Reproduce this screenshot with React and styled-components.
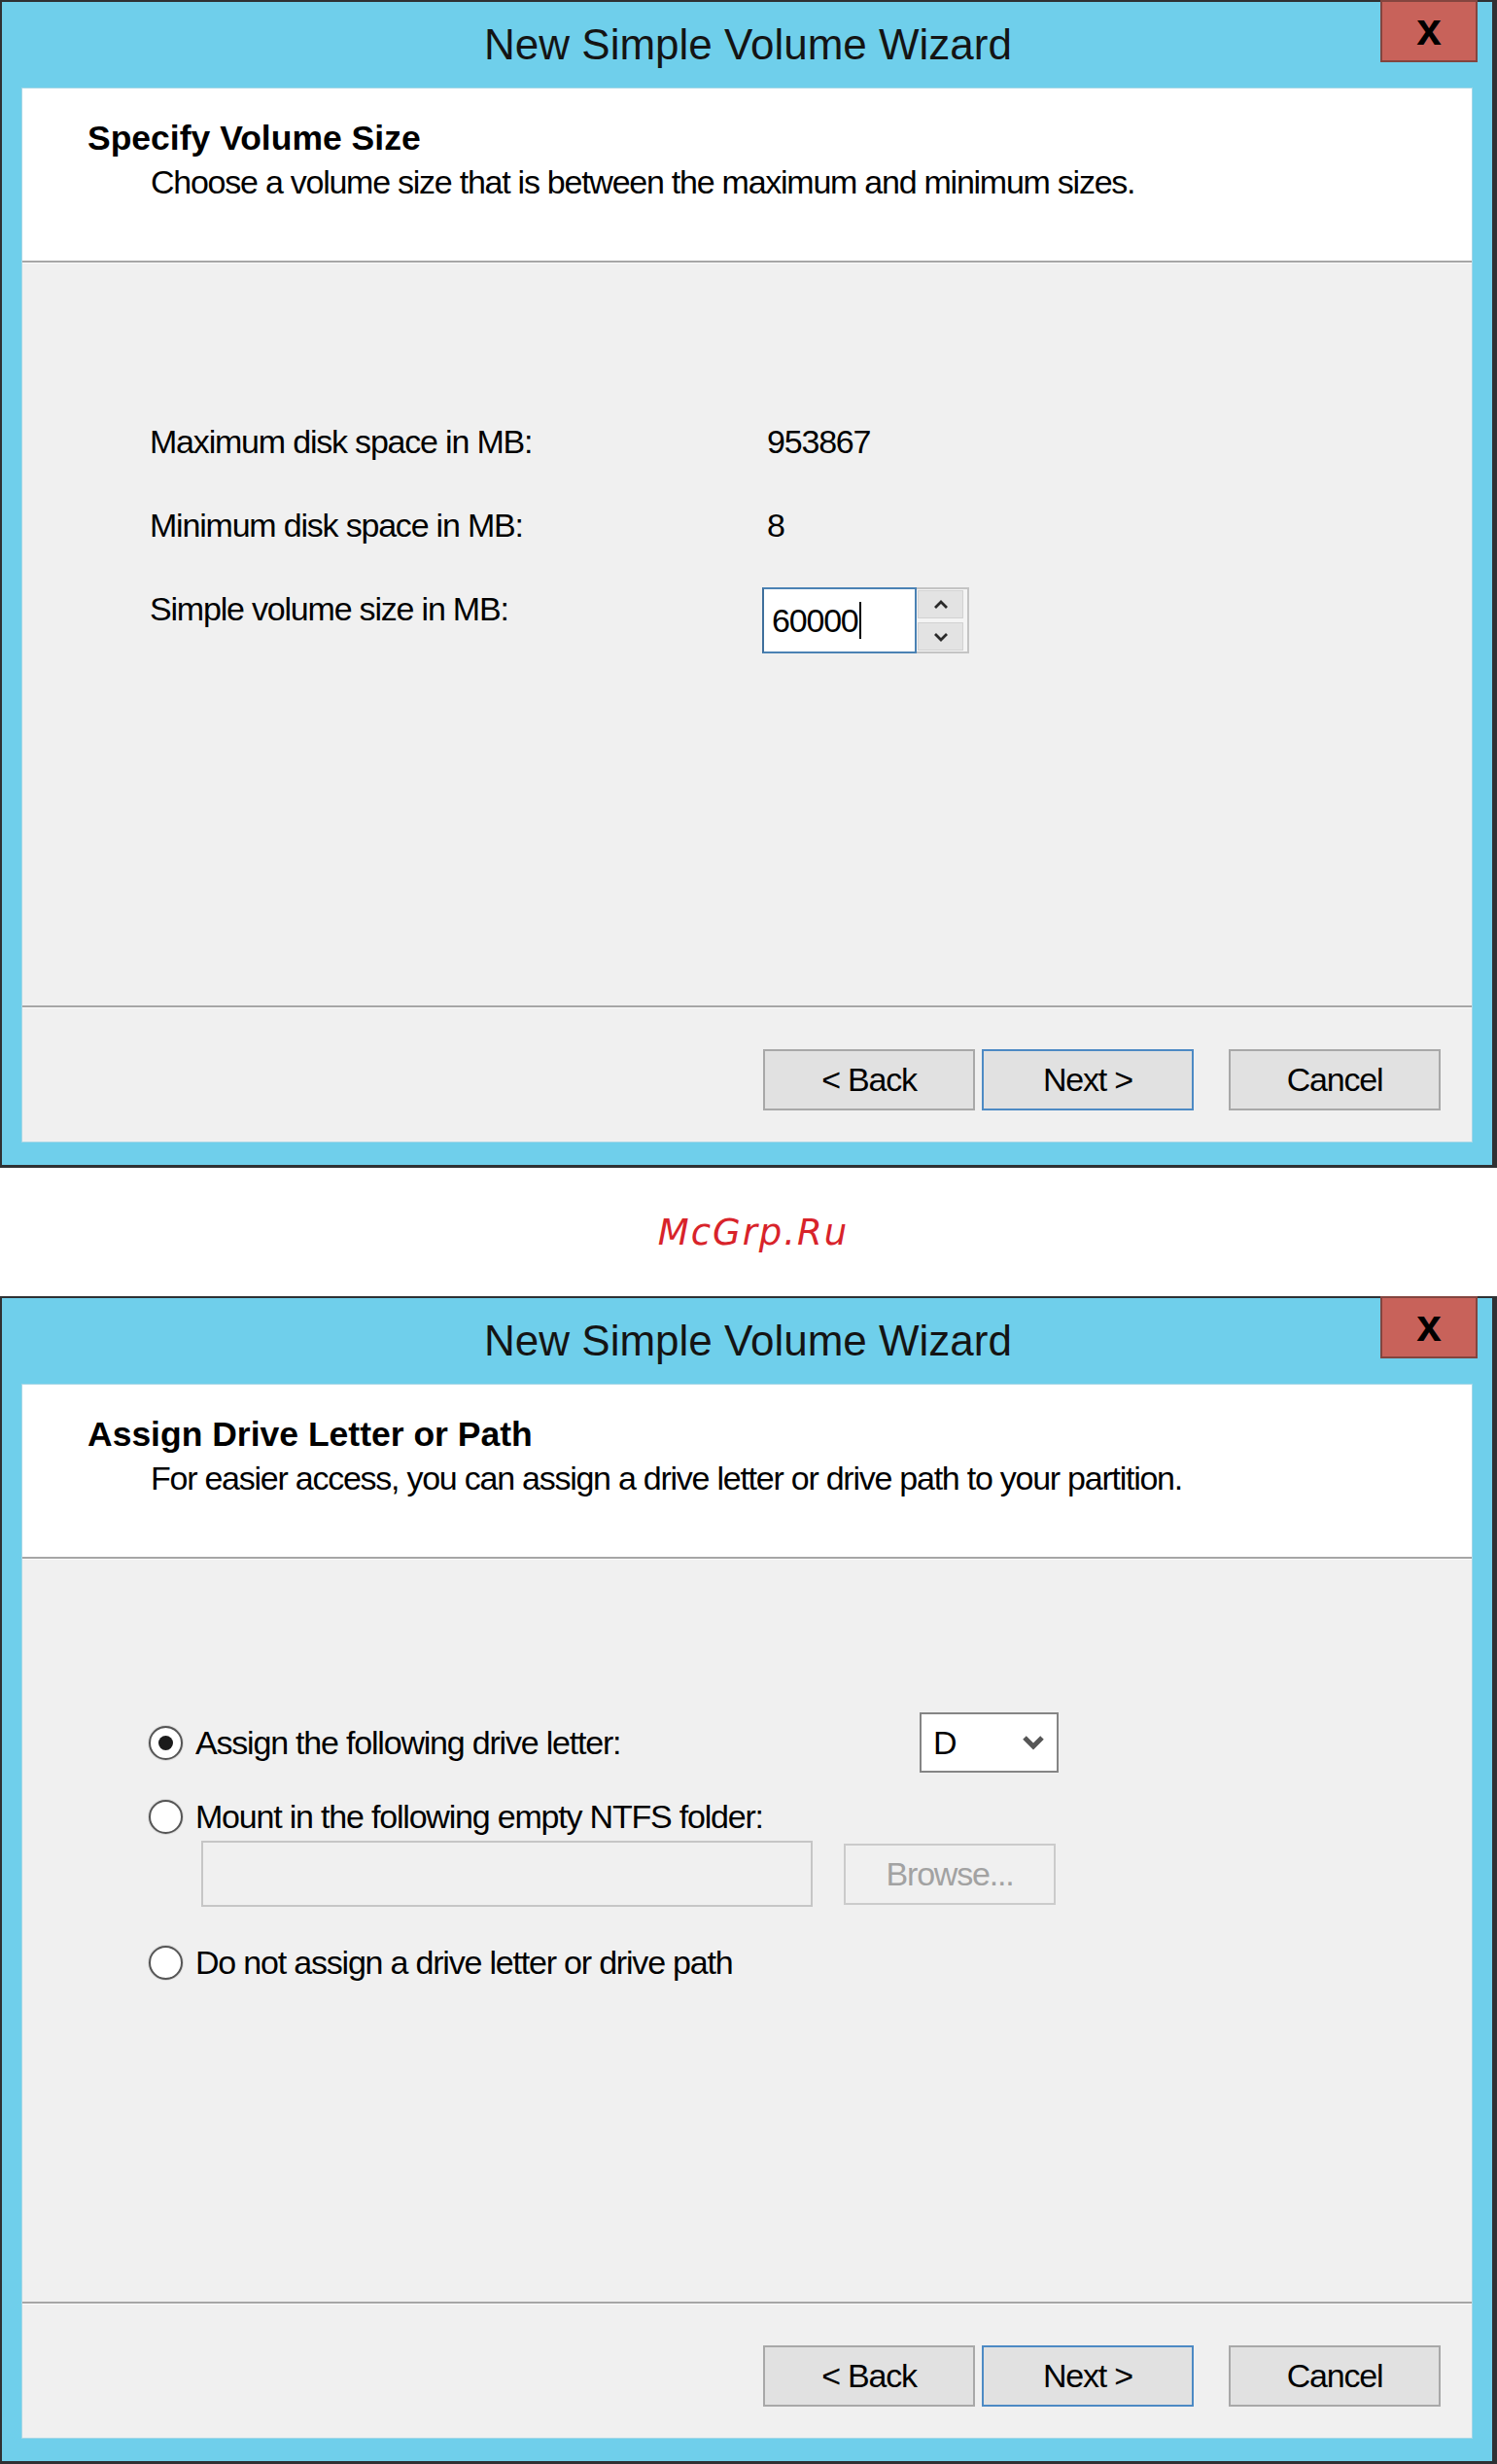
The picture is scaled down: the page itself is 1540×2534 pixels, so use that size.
import React from 'react';
import styled, { createGlobalStyle } from 'styled-components';

const GlobalStyle = createGlobalStyle`
  html, body {
    margin: 0;
    padding: 0;
    background: #ffffff;
  }
  body {
    font-family: "Liberation Sans", Arial, sans-serif;
    color: #000;
  }
`;

const Page = styled.div`
  width: 1540px;
  display: flex;
  flex-direction: column;
`;

const Window = styled.div`
  height: 1201px;
  box-sizing: border-box;
  display: flex;
  flex-direction: column;
  background: #6fcfeb;
  border-style: solid;
  border-color: #2f3133;
  border-width: 2px 5px 3px 2px;
  padding-bottom: 23px;
`;

const TitleBar = styled.div`
  position: relative;
  height: 88px;
  flex: none;
  display: flex;
  align-items: center;
  justify-content: center;
`;

const Title = styled.div`
  font-size: 44px;
  line-height: 50px;
  color: #141414;
  margin-left: 2px;
`;

const CloseButton = styled.div`
  position: absolute;
  top: -2px;
  right: 15px;
  width: 100px;
  height: 64px;
  box-sizing: border-box;
  background: #c8625a;
  border: 2px solid #83453f;
  display: flex;
  align-items: center;
  justify-content: center;
  font-size: 46px;
  font-weight: 900;
  line-height: 1;
  padding-bottom: 4px;
  color: #000;
`;

const Panel = styled.div`
  flex: 1;
  margin: 0 20px;
  display: flex;
  flex-direction: column;
  border: 1px solid #a4d6e6;
  background: #f0f0f0;
`;

const Header = styled.div`
  height: 177px;
  flex: none;
  box-sizing: border-box;
  background: #ffffff;
  padding: 31px 0 0 67px;
`;

const Heading = styled.div`
  font-size: 35.5px;
  line-height: 40px;
  font-weight: 700;
`;

const Subtitle = styled.div`
  font-size: 34px;
  line-height: 40px;
  letter-spacing: -1.25px;
  margin-top: 5px;
  padding-left: 65px;
`;

const Separator = styled.div`
  height: 2px;
  flex: none;
  background: #a6a6a6;
  border-bottom: 1px solid #fbfbfb;
`;

const Body = styled.div`
  flex: 1;
  box-sizing: border-box;
  padding: ${(p) => p.$top}px 0 0 ${(p) => p.$left || 130}px;
`;

const Text = styled.div`
  font-size: 34px;
  line-height: 40px;
  letter-spacing: -1.2px;
  color: ${(p) => (p.$disabled ? '#a2a2a2' : '#000')};
  white-space: nowrap;
`;

const SizeGrid = styled.div`
  display: grid;
  grid-template-columns: 630px auto;
  row-gap: 46px;
  align-items: start;
`;

const Value = styled(Text)`
  padding-left: 5px;
`;

const SpinBox = styled.div`
  display: flex;
  margin-top: -2px;
`;

const SpinInput = styled.div`
  width: 159px;
  height: 68px;
  box-sizing: border-box;
  background: #ffffff;
  border: 2px solid #4b82b4;
  border-left-color: #3f6f9c;
  display: flex;
  align-items: center;
  padding-left: 8px;
`;

const Cursor = styled.span`
  display: inline-block;
  width: 2px;
  height: 38px;
  background: #000;
  margin-left: 1px;
`;

const Spinner = styled.div`
  width: 54px;
  height: 68px;
  box-sizing: border-box;
  border: 2px solid #c4c4c4;
  border-left: none;
  background: #f4f4f4;
  display: flex;
  flex-direction: column;
  gap: 4px;
  padding: 1px 4px 1px 1px;
`;

const SpinButton = styled.div`
  flex: 1;
  background: #e3e3e3;
  border: 1px solid #d2d2d2;
  display: flex;
  align-items: center;
  justify-content: center;
`;

const Footer = styled.div`
  height: 137px;
  flex: none;
  box-sizing: border-box;
  display: flex;
  justify-content: flex-end;
  align-items: flex-start;
  padding: 42px 32px 0 0;
`;

const Button = styled.div`
  width: 218px;
  height: 63px;
  box-sizing: border-box;
  background: ${(p) => (p.$disabled ? '#f0f0f0' : '#e1e1e1')};
  border: 2px solid ${(p) => (p.$default ? '#4d8ac4' : p.$disabled ? '#cbcbcb' : '#a8a8a8')};
  margin-left: ${(p) => p.$gap || 0}px;
  display: flex;
  align-items: center;
  justify-content: center;
  font-size: 34px;
  letter-spacing: -1.2px;
  color: ${(p) => (p.$disabled ? '#a2a2a2' : '#000')};
`;

const Watermark = styled.div`
  height: 132px;
  flex: none;
  display: flex;
  align-items: center;
  justify-content: center;
  font-family: "DejaVu Sans", sans-serif;
  font-style: italic;
  font-size: 37px;
  letter-spacing: 2px;
  color: #d8232a;
  padding-left: 10px;
`;

const LetterRow = styled.div`
  display: grid;
  grid-template-columns: 793px 143px;
  align-items: center;
`;

const RadioRow = styled.div`
  display: flex;
  align-items: center;
  gap: 13px;
  margin-top: ${(p) => p.$mt || 0}px;
`;

const Radio = styled.span`
  width: 35px;
  height: 35px;
  box-sizing: border-box;
  border-radius: 50%;
  border: 2px solid #555;
  background: #fff;
  box-shadow: 0 0 0 1px #d8d8d8;
  display: flex;
  align-items: center;
  justify-content: center;
  flex: none;

  &::after {
    content: '';
    width: 15px;
    height: 15px;
    border-radius: 50%;
    background: #1b1b1b;
    display: ${(p) => (p.$checked ? 'block' : 'none')};
  }
`;

const Select = styled.div`
  width: 143px;
  height: 62px;
  box-sizing: border-box;
  background: #fff;
  border: 2px solid #858585;
  display: flex;
  align-items: center;
  justify-content: space-between;
  padding: 0 12px 0 12px;
`;

const FolderRow = styled.div`
  display: flex;
  align-items: center;
  gap: 32px;
  padding-left: 54px;
  margin-top: 5px;
`;

const FolderField = styled.div`
  width: 629px;
  height: 68px;
  box-sizing: border-box;
  border: 2px solid #c6c6c6;
  background: #f0f0f0;
`;

function Caret({ down }) {
  return (
    <svg width="18" height="12" viewBox="0 0 18 12">
      <polyline
        points={down ? '3,3 9,9 15,3' : '3,9 9,3 15,9'}
        fill="none"
        stroke="#2a2a2a"
        strokeWidth="2.8"
      />
    </svg>
  );
}

function WizardFooter() {
  return (
    <>
      <Separator />
      <Footer>
        <Button>&lt; Back</Button>
        <Button $default $gap={7}>Next &gt;</Button>
        <Button $gap={36}>Cancel</Button>
      </Footer>
    </>
  );
}

function WizardWindow({ heading, subtitle, children }) {
  return (
    <Window>
      <TitleBar>
        <Title>New Simple Volume Wizard</Title>
        <CloseButton>x</CloseButton>
      </TitleBar>
      <Panel>
        <Header>
          <Heading>{heading}</Heading>
          <Subtitle>{subtitle}</Subtitle>
        </Header>
        <Separator />
        {children}
        <WizardFooter />
      </Panel>
    </Window>
  );
}

function VolumeSize() {
  return (
    <WizardWindow
      heading="Specify Volume Size"
      subtitle="Choose a volume size that is between the maximum and minimum sizes."
    >
      <Body $top={163} $left={131}>
        <SizeGrid>
          <Text>Maximum disk space in MB:</Text>
          <Value>953867</Value>
          <Text>Minimum disk space in MB:</Text>
          <Value>8</Value>
          <Text>Simple volume size in MB:</Text>
          <SpinBox>
            <SpinInput>
              <Text>60000</Text>
              <Cursor />
            </SpinInput>
            <Spinner>
              <SpinButton>
                <Caret />
              </SpinButton>
              <SpinButton>
                <Caret down />
              </SpinButton>
            </Spinner>
          </SpinBox>
        </SizeGrid>
      </Body>
    </WizardWindow>
  );
}

function DriveLetter() {
  return (
    <WizardWindow
      heading="Assign Drive Letter or Path"
      subtitle="For easier access, you can assign a drive letter or drive path to your partition."
    >
      <Body $top={157}>
        <LetterRow>
          <RadioRow>
            <Radio $checked />
            <Text>Assign the following drive letter:</Text>
          </RadioRow>
          <Select>
            <Text>D</Text>
            <svg width="24" height="20" viewBox="0 0 24 20">
              <polyline points="3,5 12,14 21,5" fill="none" stroke="#565656" strokeWidth="5" />
            </svg>
          </Select>
        </LetterRow>
        <RadioRow $mt={25}>
          <Radio />
          <Text>Mount in the following empty NTFS folder:</Text>
        </RadioRow>
        <FolderRow>
          <FolderField />
          <Button $disabled>Browse...</Button>
        </FolderRow>
        <RadioRow $mt={37}>
          <Radio />
          <Text>Do not assign a drive letter or drive path</Text>
        </RadioRow>
      </Body>
    </WizardWindow>
  );
}

export default function App() {
  return (
    <Page>
      <GlobalStyle />
      <VolumeSize />
      <Watermark>McGrp.Ru</Watermark>
      <DriveLetter />
    </Page>
  );
}
